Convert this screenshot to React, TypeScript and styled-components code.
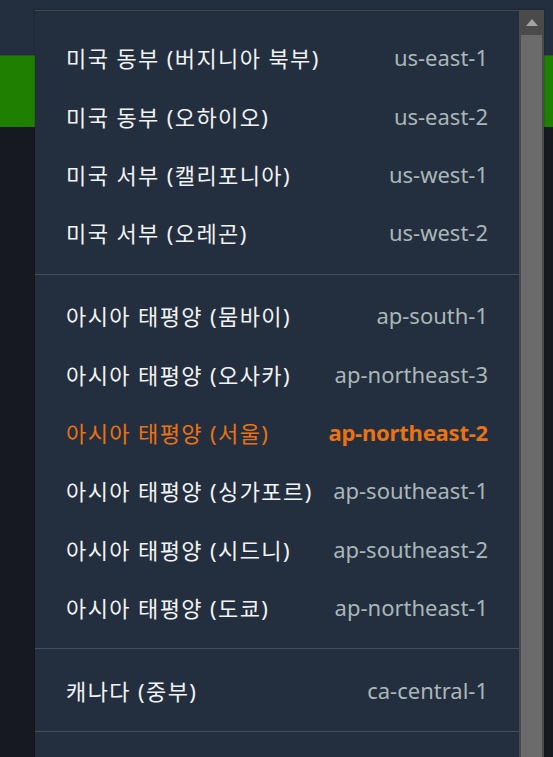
import React from "react";
import styled, { createGlobalStyle } from "styled-components";

const GlobalStyle = createGlobalStyle`
  html, body { margin: 0; padding: 0; background: #16191f; }
  #root { height: 757px; overflow: hidden; }
  * { box-sizing: border-box; }
`;

const Page = styled.div`
  position: relative;
  height: 757px;
  display: flex;
  flex-direction: column;
  background: #16191f;
  font-family: "Noto Sans", "Noto Sans CJK KR", sans-serif;
`;

const TopBar = styled.div`
  height: 55px;
  background: #232f3e;
`;

const GreenBar = styled.div`
  height: 72px;
  background: #1f7f00;
  border-top: 1px solid #3b4a3a;
`;

const Menu = styled.div`
  position: absolute;
  left: 35px;
  top: 10px;
  width: 509px;
  bottom: 0;
  display: flex;
  box-shadow: 0 0 2px rgba(0, 0, 0, 0.35);
`;

const List = styled.div`
  width: 484px;
  background: #232f3e;
  border-top: 1px solid #414750;
  padding-top: 5.5px;
  display: flex;
  flex-direction: column;
`;

const Group = styled.div`
  padding: 11.5px 0 12px;
  border-bottom: 1px solid #464f59;
`;

const Row = styled.div`
  height: 58.4px;
  padding: 0 31px;
  display: flex;
  align-items: center;
  justify-content: space-between;
  font-size: 22px;
`;

const Name = styled.span<{ $active?: boolean }>`
  color: ${(p) => (p.$active ? "#ec7211" : "#f2f3f3")};
  letter-spacing: 1.4px;
`;

const Code = styled.span<{ $active?: boolean }>`
  color: ${(p) => (p.$active ? "#ec7211" : "#aab7b8")};
  font-weight: ${(p) => (p.$active ? 700 : 400)};
  letter-spacing: ${(p) => (p.$active ? "-0.2px" : "0")};
`;

const Scrollbar = styled.div`
  width: 25px;
  background: #4a4a4a;
  display: flex;
  flex-direction: column;
  align-items: center;
`;

const ArrowBox = styled.div`
  height: 25px;
  width: 100%;
  display: flex;
  align-items: center;
  justify-content: center;
`;

const Thumb = styled.div`
  flex: 1;
  width: 21px;
  background: #6b6b6b;
`;

type Region = { name: string; code: string; active?: boolean };

const groups: Region[][] = [
  [
    { name: "미국 동부 (버지니아 북부)", code: "us-east-1" },
    { name: "미국 동부 (오하이오)", code: "us-east-2" },
    { name: "미국 서부 (캘리포니아)", code: "us-west-1" },
    { name: "미국 서부 (오레곤)", code: "us-west-2" },
  ],
  [
    { name: "아시아 태평양 (뭄바이)", code: "ap-south-1" },
    { name: "아시아 태평양 (오사카)", code: "ap-northeast-3" },
    { name: "아시아 태평양 (서울)", code: "ap-northeast-2", active: true },
    { name: "아시아 태평양 (싱가포르)", code: "ap-southeast-1" },
    { name: "아시아 태평양 (시드니)", code: "ap-southeast-2" },
    { name: "아시아 태평양 (도쿄)", code: "ap-northeast-1" },
  ],
  [{ name: "캐나다 (중부)", code: "ca-central-1" }],
];

export default function App() {
  return (
    <>
      <GlobalStyle />
      <Page>
        <TopBar />
        <GreenBar />
        <Menu>
          <List>
            {groups.map((g, i) => (
              <Group key={i}>
                {g.map((r) => (
                  <Row key={r.code}>
                    <Name $active={r.active}>{r.name}</Name>
                    <Code $active={r.active}>{r.code}</Code>
                  </Row>
                ))}
              </Group>
            ))}
          </List>
          <Scrollbar>
            <ArrowBox>
              <svg width="12" height="7" viewBox="0 0 12 7">
                <polygon points="6,0 12,7 0,7" fill="#a3a3a3" />
              </svg>
            </ArrowBox>
            <Thumb />
          </Scrollbar>
        </Menu>
      </Page>
    </>
  );
}
